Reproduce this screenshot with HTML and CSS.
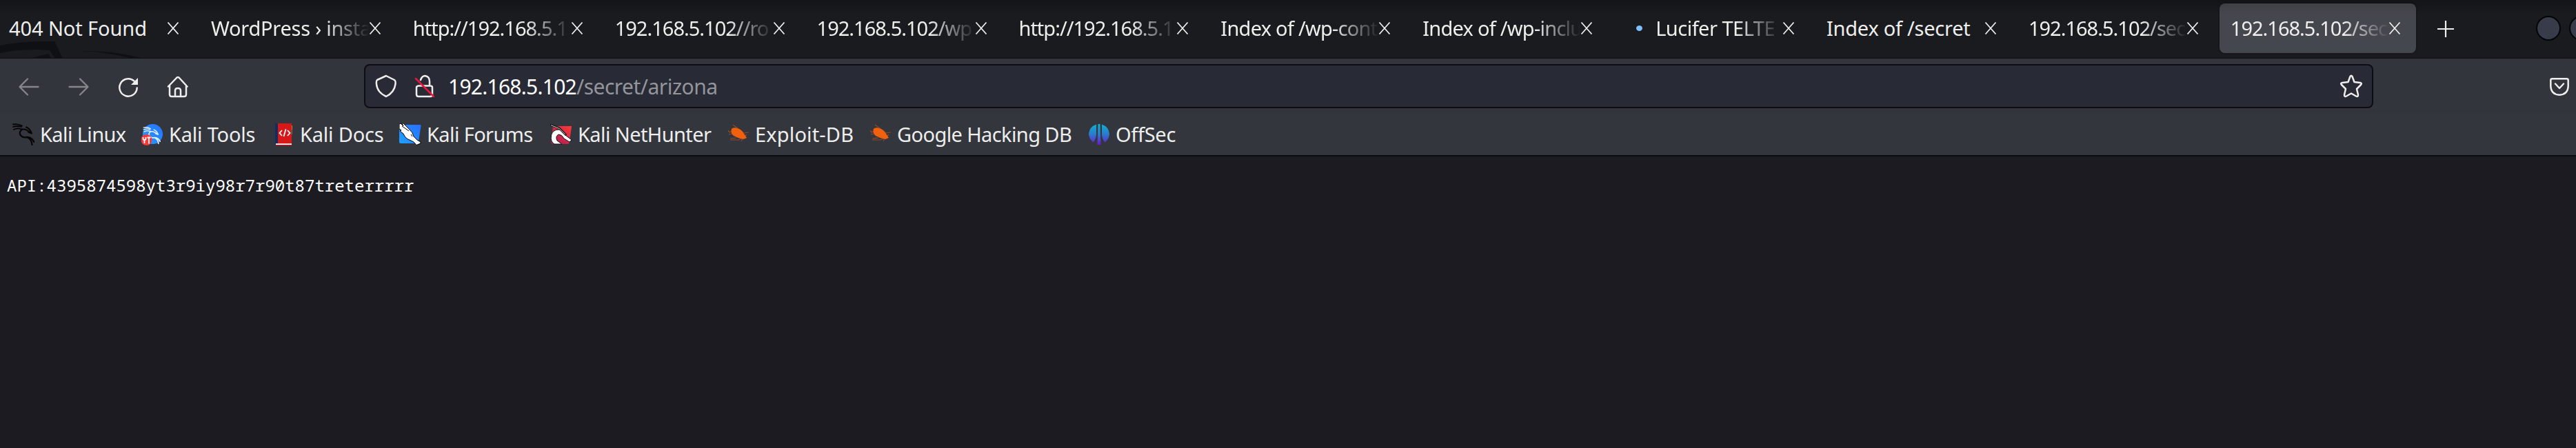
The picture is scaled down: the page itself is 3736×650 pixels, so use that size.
FILE: index.html
```html
<!DOCTYPE html>
<html lang="en"><head><meta charset="utf-8"><title>192.168.5.102/secret/arizona</title><link rel="stylesheet" href="styles.css"></head>
<body>
<svg width="0" height="0" class="defs"><defs>
<symbol id="x" viewBox="0 0 20 20"><path d="M2.500 1.500 17.500 18.500M17.500 1.500 2.500 18.500" fill="none" stroke="#eeeeec" stroke-width="1.800"/></symbol>
<symbol id="bug" viewBox="0 0 32 32"><g fill="none" stroke="#8f4828" stroke-width="1.200"><path d="M7 7 12 10M8 2l4 3 8 6 4 4M1 12h7M2 16l6-1M23 14l8-1M4 22l9-1M4 24h12l4-2M22 22l-2 4M28 16l-3 3M1 10l3 4"/></g><path d="M6 8Q9 5 14 7Q21 9 24 15L28 21 23 23Q16 22 9 18Q4 14 6 8Z" fill="#f0600d"/></symbol>
<symbol id="dragon" viewBox="0 0 32 32"><g fill="none" stroke="currentColor" stroke-linecap="round" stroke-linejoin="round"><path d="M1 1.500Q8 0 14 3.500M1 5Q8 3 13 5M2 9Q7 6.500 12 8" stroke-width="1.800"/><path d="M13 9Q19 7 26 13.500M20 5.500Q25 7 28 14.500L23 12.500" stroke-width="2"/><path d="M14 8.500Q8 14 13 18.500Q16 21 21 20Q28 20 31.500 27M23 21Q28 24 28.500 31" stroke-width="2.300"/></g></symbol>
<linearGradient id="off" x1="0" y1="0" x2="0" y2="1"><stop stop-color="#0fb2ce"/><stop offset=".5" stop-color="#2b7acb"/><stop offset="1" stop-color="#6d16d4"/></linearGradient>
<linearGradient id="blue" x1="1" y1="0" x2="0" y2="1"><stop stop-color="#2870ff"/><stop offset="1" stop-color="#20a0ff"/></linearGradient>
<linearGradient id="red" x1="1" y1="0" x2="0" y2="1"><stop stop-color="#ff3b36"/><stop offset="1" stop-color="#a6165a"/></linearGradient>
</defs></svg>
<div class="tabs">
<svg class="art" viewBox="0 0 215 26"><path d="M0 6Q35-1 79 0L91 25H80L72 13Q35 10 0 17Z" fill="#0f1013"/><path d="M42 25 70 18 75 25Z" fill="#0f1013"/><path d="M118 14Q165 13 208 25H192Q160 16 118 14Z" fill="#0f1013"/></svg>
<div class="tab"><span class="title wide">404 Not Found</span><svg class="close"><use href="#x"/></svg></div>
<div class="tab"><span class="title fade">WordPress › insta</span><svg class="close"><use href="#x"/></svg></div>
<div class="tab"><span class="title fade ip">http://192.168.5.1</span><svg class="close"><use href="#x"/></svg></div>
<div class="tab"><span class="title fade ip">192.168.5.102//ro</span><svg class="close"><use href="#x"/></svg></div>
<div class="tab"><span class="title fade ip">192.168.5.102/wp</span><svg class="close"><use href="#x"/></svg></div>
<div class="tab"><span class="title fade ip">http://192.168.5.1</span><svg class="close"><use href="#x"/></svg></div>
<div class="tab"><span class="title fade idx">Index of /wp-cont</span><svg class="close"><use href="#x"/></svg></div>
<div class="tab"><span class="title fade idx">Index of /wp-inclu</span><svg class="close"><use href="#x"/></svg></div>
<div class="tab"><i class="dot"></i><span class="title fade">Lucifer TELTE</span><svg class="close"><use href="#x"/></svg></div>
<div class="tab"><span class="title">Index of /secret</span><svg class="close"><use href="#x"/></svg></div>
<div class="tab"><span class="title fade ip">192.168.5.102/sec</span><svg class="close"><use href="#x"/></svg></div>
<div class="tab active"><span class="title fade ip">192.168.5.102/sec</span><svg class="close"><use href="#x"/></svg></div>
<svg class="plus" viewBox="0 0 24 24"><path d="M12 0V24M0 12H24" stroke="#eeeeec" stroke-width="2.200"/></svg>
<div class="wins"><i></i><i></i></div>
</div>
<div class="nav">
<svg class="n dim" viewBox="0 0 32 32"><path d="M29.500 16H3M14 4.500 2.500 16 14 27.500"/></svg>
<svg class="n dim" viewBox="0 0 32 32"><path d="M2.500 16H29M18 4.500 29.500 16 18 27.500"/></svg>
<svg class="n" viewBox="0 0 32 32"><path d="M24.500 7.500A12.700 12.700 0 1 0 28.700 17.500"/><path d="M30 3V13H20Z" fill="#eeeeec" stroke="none"/></svg>
<svg class="n" viewBox="0 0 32 32"><path d="M2 15.500 14.500 2.500Q16 1.500 17.500 2.500L29.500 15.500M4 14V27Q4 30 7 30H25Q28 30 28 27V14M12 30V21.500Q12 18 16 18T20 21.500V30"/></svg>
<div class="url">
<svg class="s" viewBox="0 0 32 34"><path d="M17 2 29 8Q31 9 30.500 14Q29 26 17 32Q4 26 3 14Q2.500 9 4 8Z"/></svg>
<svg class="s lock" viewBox="0 0 32 34"><path d="M12 8Q14 2 18.500 2Q25 3 25 10V16M10 16.500H26Q29 16.500 29 19V29Q29 32 26 32H9Q6 32 6 29V19Q6 16.500 10 16.500"/><path class="strike" d="M5 6 31 32"/></svg>
<span class="addr">192.168.5.102<em>/secret/arizona</em></span>
<svg class="s star" viewBox="0 0 32 34"><path d="M14.500 3Q16 .5 17.500 3L20.500 11 29 12Q32 12.500 30 15L24 21 26 29.500Q26 33 23 31.500L16 27.500 9 31.500Q6 33 6 29.500L8 21 2 15Q0 12.500 3 12L11.500 11Z"/></svg>
</div>
<svg class="pocket" viewBox="0 0 28 26"><path d="M3.500 1.300H24.500Q26.700 1.300 26.700 3.500V12.500Q26 24 14 24.700Q2 24 1.300 12.500V3.500Q1.300 1.300 3.500 1.300ZM8 8.500 14 15 20 8.500"/></svg>
</div>
<div class="marks">
<a class="m1"><svg class="dark" viewBox="0 0 32 32"><use href="#dragon"/></svg><span>Kali Linux</span></a>
<a class="m2"><svg class="white" viewBox="0 0 32 32"><circle cx="16.500" cy="15.500" r="14.500" fill="url(#blue)"/><use href="#dragon" x="1" y="5" width="28" height="25"/><circle cx="7.500" cy="24" r="8" fill="#f83637"/><path d="M2.500 20v2q0 2 2 2v5M6.500 20v2q0 2-2 2M8.500 20.500h5M11 20.500v9" stroke="#fff" stroke-width="1.800" fill="none"/></svg><span>Kali Tools</span></a>
<a class="m3"><svg viewBox="0 0 32 32"><path d="M4 0H8V31H4Z" fill="#102d62"/><path d="M8 0H28V32H5V29H8Z" fill="#d81718"/><path d="M28 3h.8v6H28z" fill="#c89d20"/><path d="M28 9h.8v7H28z" fill="#22a06b"/><path d="M5 29.300H28V31H5Z" fill="#fff"/><path d="M14 10 10.500 14 14 18M22 10 25.500 14 22 18M19.500 8.500 16.500 19" stroke="#fff" stroke-width="1.800" fill="none"/></svg><span>Kali Docs</span></a>
<a class="m4"><svg viewBox="0 0 32 32"><path d="M0 2H30Q32 2 31.500 4L28 26Q27.500 29 25 29H2Q0 29 0 27Z" fill="url(#blue)"/><path d="M0 1 2 0 6 4 4 0H6L14 8Q20 13 21 19L26 24 31 27V29L25 31.500 21 27 15 24Q9 22 6 15L1 11 3 10 0 8Z" fill="#fff" stroke="#000" stroke-width="1"/><path d="M4 4 14 11M17 16l2 3" stroke="#000"/></svg><span>Kali Forums</span></a>
<a class="m5"><svg viewBox="0 0 32 32"><path d="M4 4H31L28 27Q27.500 30 25 30H4Q1 30 1 27Z" fill="url(#red)"/><path d="M6 30Q0 27 1.500 17Q4 9 12 9Q17 9 22 17L31 24 28 27 20 22Q17 16 12 16Q7 19 10 25L17 30Z" fill="#fff" stroke="#111" stroke-width="1"/><path d="M0 2 13 7 23 17" stroke="#111" stroke-width="3" fill="none"/><path d="M1 2.500 13 7.500 22 16" stroke="#ccc" stroke-width="1" fill="none"/></svg><span>Kali NetHunter</span></a>
<a class="m6"><svg><use href="#bug"/></svg><span>Exploit-DB</span></a>
<a class="m7"><svg><use href="#bug"/></svg><span>Google Hacking DB</span></a>
<a class="m8"><svg viewBox="0 0 32 32"><path d="M12 1.500V17Q11 24 7.500 27.500Q1 22 1 15Q2 5 12 1.500ZM20 1.500V17Q21 24 24.500 27.500Q31 22 31 15Q30 5 20 1.500ZM14.500 1h3L18.500 31h-5Z" fill="url(#off)"/></svg><span>OffSec</span></a>
</div>
<pre class="body">API:4395874598yt3r9iy98r7r90t87treterrrrr</pre>
</body></html>
```
FILE: styles.css
```css
*{box-sizing:border-box}
body{margin:0;width:3736px;height:650px;overflow:hidden;background:#1c1b22;color:#eeeeec;font:29px/36px "Noto Sans",sans-serif}
.defs{position:absolute}
.tabs{position:relative;height:85px;background:linear-gradient(#131417,#1a1b1f 20px);border-bottom:1px solid #0f1013;display:flex;padding-top:5px;overflow:hidden}
.art{position:absolute;left:0;top:60px;width:215px;height:26px}
.tab{position:relative;flex:none;width:284.900px;height:72px;margin-right:8px;padding-left:16px;display:flex;align-items:center;border-radius:8px}
.tab:first-of-type{margin-left:-3px}
.active{background:linear-gradient(#3f4045,#45474e 16px);box-shadow:0 0 3px #0008}
.title{flex:none;width:228px;white-space:nowrap;letter-spacing:-.25px}
.wide{letter-spacing:-.1px}
.ip{letter-spacing:-1px}
.idx{letter-spacing:-.75px}
.fade{-webkit-mask-image:linear-gradient(90deg,#000 164px,transparent 230px);mask-image:linear-gradient(90deg,#000 164px,transparent 230px)}
.dot{flex:none;width:9px;height:8px;border-radius:50%;background:#80bfff;margin:0 19px 0 17px}
.dot+.title{width:183px;letter-spacing:-.5px;-webkit-mask-image:linear-gradient(90deg,#000 119px,transparent 183px);mask-image:linear-gradient(90deg,#000 119px,transparent 183px)}
.close{flex:none;width:20px;height:20px}
.plus{flex:none;width:24px;height:24px;margin:25px 0 0 23px}
.wins{flex:none;display:flex;gap:12px;margin:18px 0 0 119px}
.wins i{width:36px;height:36px;border-radius:50%;background:#383c4a;border:2px solid #050507}
.nav{height:80px;background:#33353d;display:flex;align-items:center;padding-left:26px}
svg{fill:none}
.n,.s,.pocket{stroke:#eeeeec;stroke-width:2.500;stroke-linecap:round;stroke-linejoin:round}
.n{flex:none;width:32px;height:32px;margin-right:40px;margin-top:2px}
.dim{stroke:#85868a;stroke-width:2.300}
.url{flex:none;width:2914px;height:64px;margin-left:214px;border:2px solid #0c0d12;border-radius:8px;background:#282a36;display:flex;align-items:center;padding-left:13px}
.s{flex:none;width:32px;height:34px}
.lock{margin-left:23px}
.strike{stroke:#e8173e}
.addr{margin:1px 0 0 20px;color:#fff;font-size:30px;letter-spacing:-.75px}
.addr em{font-style:normal;color:#94959b;letter-spacing:-.5px}
.star{margin-left:auto;margin-right:14px}
.pocket{flex:none;width:28px;height:26px;margin-left:256px;margin-top:1px}
.marks{position:relative;height:62px;background:#33363d;border-bottom:2px solid #0c0d12;display:flex;padding-left:18px}
.marks a{flex:none;display:flex;align-items:center;height:60px;white-space:nowrap;letter-spacing:-.6px}
.marks svg{width:32px;height:32px;flex:none}
.marks span{margin-left:8px}
.m1{width:187px}.m2{width:190px}.m3{width:184px}.m4{width:219px}.m5{width:257px}.m6{width:206px}.m7{width:317px}
.marks .m2{letter-spacing:-.2px}
.marks .m3{letter-spacing:-.2px}
.marks .m6{letter-spacing:.15px}
.marks .m8{letter-spacing:-.3px}
.dark{color:#050506}.white{color:#e5efff}
.body{margin:24px 0 0 10px;font:24px/36px "Noto Sans Mono","DejaVu Sans Mono",monospace;color:#fff}
```
